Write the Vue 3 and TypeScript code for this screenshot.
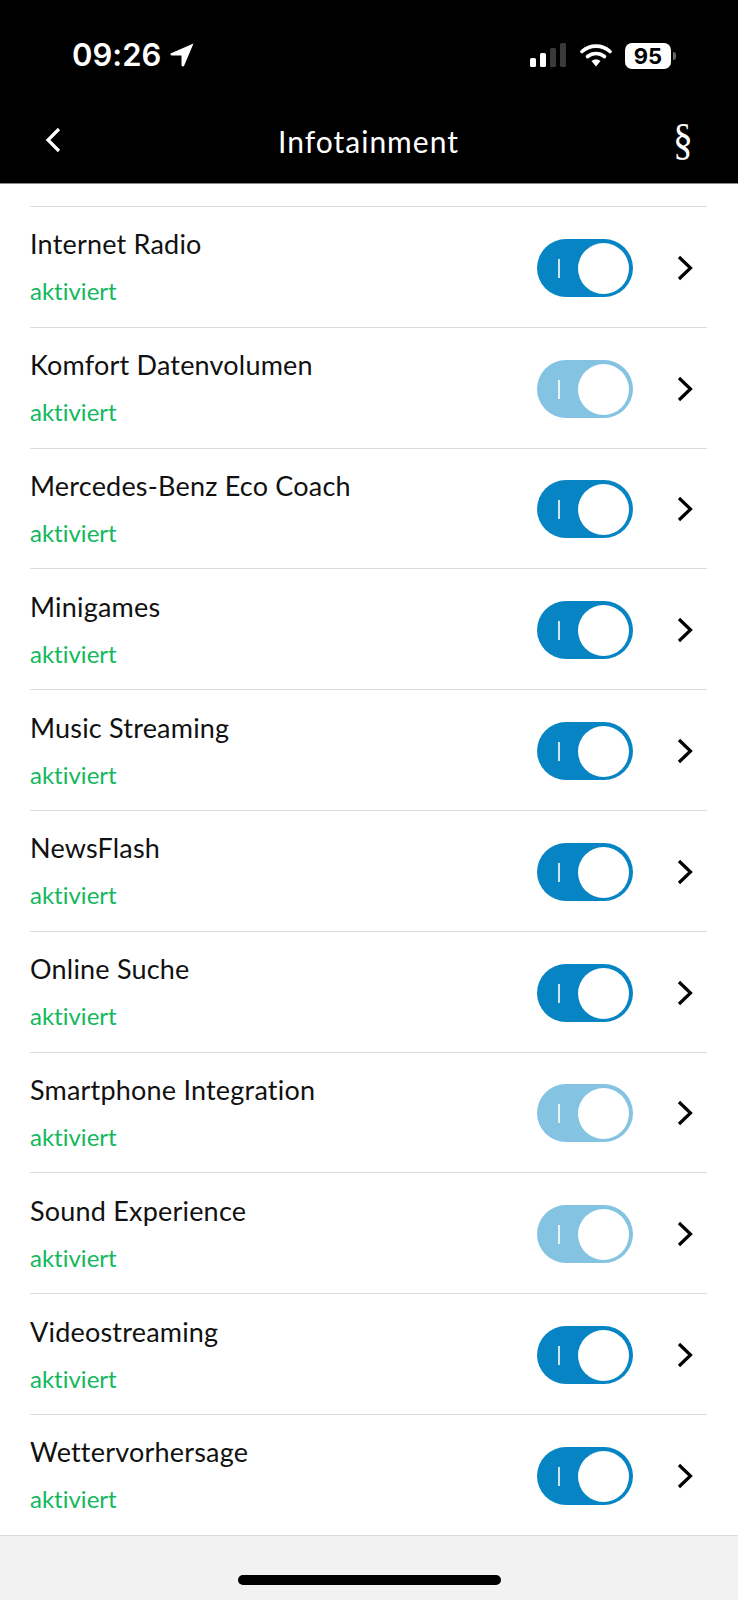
<script setup lang="ts">
interface Row { name: string; dim?: boolean }
const rows: Row[] = [
  { name: 'Internet Radio' },
  { name: 'Komfort Datenvolumen', dim: true },
  { name: 'Mercedes-Benz Eco Coach' },
  { name: 'Minigames' },
  { name: 'Music Streaming' },
  { name: 'NewsFlash' },
  { name: 'Online Suche' },
  { name: 'Smartphone Integration', dim: true },
  { name: 'Sound Experience', dim: true },
  { name: 'Videostreaming' },
  { name: 'Wettervorhersage' },
]
</script>

<template>
  <div class="page">
    <header class="top">
      <div class="status">
        <div class="clock">
          <span class="time">09:26</span>
          <svg class="loc" viewBox="0 0 24 24" width="24" height="24"><path d="M23.5 0.5 L0.5 10.5 Q0 12 1.5 12.5 L11.5 12.5 L11.5 22.5 Q12.5 24 14 23 Z" fill="#fff" /></svg>
        </div>
        <div class="indicators">
          <svg viewBox="0 0 36 24" width="36" height="24" class="signal">
            <rect x="0" y="15" width="6" height="9" rx="1.5" fill="#fff" />
            <rect x="10" y="10" width="6" height="14" rx="1.5" fill="#fff" />
            <rect x="20" y="5" width="6" height="19" rx="1.5" fill="#3a3a3a" />
            <rect x="30" y="0" width="6" height="24" rx="1.5" fill="#3a3a3a" />
          </svg>
          <svg viewBox="0 0 32 24" width="32" height="24" class="wifi">
            <path d="M2 8.5 A21 21 0 0 1 30 8.5" fill="none" stroke="#fff" stroke-width="3.6" stroke-linecap="round" />
            <path d="M7.5 13.5 A13.5 13.5 0 0 1 24.5 13.5" fill="none" stroke="#fff" stroke-width="3.6" stroke-linecap="round" />
            <path d="M11.5 18 L16 23.5 L20.5 18 A7 7 0 0 0 11.5 18 Z" fill="#fff" />
          </svg>
          <div class="battery">
            <span class="level">95</span>
            <span class="cap"></span>
          </div>
        </div>
      </div>
      <div class="nav">
        <svg class="back" viewBox="0 0 16 26" width="16" height="26"><path d="M14 2 L3 13 L14 24" fill="none" stroke="#fff" stroke-width="3.2" /></svg>
        <h1 class="title">Infotainment</h1>
        <span class="para">§</span>
      </div>
    </header>

    <main class="list">
      <div v-for="row in rows" :key="row.name" class="row">
        <div class="labels">
          <span class="name">{{ row.name }}</span>
          <span class="state">aktiviert</span>
        </div>
        <div class="toggle" :class="{ dim: row.dim }">
          <span class="mark"></span>
          <span class="knob"></span>
        </div>
        <svg class="chev" viewBox="0 0 16 26" width="16" height="26"><path d="M2 2 L13.5 13 L2 24" fill="none" stroke="#000" stroke-width="3.2" /></svg>
      </div>
    </main>

    <footer class="foot"><span class="home"></span></footer>
  </div>
</template>

<style>
html, body { margin: 0; background: #fff; }
</style>

<style scoped>
.page {
  width: 738px;
  height: 1600px;
  display: flex;
  flex-direction: column;
  font-family: "Lato", "Liberation Sans", sans-serif;
  font-variant-ligatures: none;
  overflow: hidden;
  background: #fff;
}
.top {
  height: 184px;
  box-sizing: border-box;
  background: #000;
  border-bottom: 1px solid #8a8a8a;
  color: #fff;
  display: flex;
  flex-direction: column;
}
.status {
  height: 36px;
  margin-top: 37px;
  padding: 0 62px 0 72px;
  display: flex;
  justify-content: space-between;
  align-items: center;
}
.clock { display: flex; align-items: center; gap: 9px; }
.time {
  font-family: "Inter", sans-serif;
  font-size: 31px;
  font-weight: 600;
  line-height: 36px;
}
.indicators { display: flex; align-items: center; }
.signal { margin-right: 14px; }
.wifi { margin-right: 13px; }
.battery { display: flex; align-items: center; margin-top: 2px; }
.level {
  width: 46px;
  height: 26px;
  border-radius: 7px;
  background: #fff;
  color: #000;
  font-family: "Inter", sans-serif;
  font-size: 22px;
  font-weight: 700;
  line-height: 26px;
  text-align: center;
}
.cap {
  width: 3px;
  height: 8px;
  margin-left: 2px;
  border-radius: 0 3px 3px 0;
  background: #666;
}
.nav {
  height: 60px;
  margin-top: 37px;
  padding: 0 44px 0 45px;
  display: flex;
  align-items: center;
  justify-content: space-between;
}
.title {
  margin: 2px 0 0 4px;
  font-size: 30px;
  font-weight: 400;
  letter-spacing: 1px;
  color: #fff;
}
.para {
  font-family: "Liberation Serif", serif;
  font-size: 44px;
  line-height: 60px;
  display: inline-block;
  transform: scaleX(0.9);
}
.list {
  flex: 1;
  margin: 0 31px 0 30px;
  padding-top: 22px;
}
.row {
  height: 120.8px;
  box-sizing: border-box;
  border-top: 1px solid #dcdcdc;
  display: flex;
  align-items: center;
}
.labels { flex: 1; display: flex; flex-direction: column; gap: 16px; padding-top: 1px; }
.name { font-size: 27px; line-height: 32px; color: #111; letter-spacing: 0.2px; }
.state { font-size: 24px; line-height: 30px; color: #12b85c; letter-spacing: 0; }
.toggle {
  width: 96px;
  height: 58px;
  border-radius: 29px;
  background: #0784c3;
  position: relative;
  margin: 2px 45px 0 0;
}
.toggle.dim { background: #84c3e2; }
.mark {
  position: absolute;
  left: 21px;
  top: 20px;
  width: 2px;
  height: 19px;
  background: rgba(255, 255, 255, 0.8);
}
.knob {
  position: absolute;
  right: 4px;
  top: 4px;
  width: 51px;
  height: 51px;
  border-radius: 50%;
  background: #fff;
}
.chev { margin: 2px 14px 0 -1px; }
.foot {
  height: 64px;
  background: #f2f2f2;
  border-top: 1px solid #dcdcdc;
  position: relative;
}
.home {
  position: absolute;
  left: 238px;
  top: 39px;
  width: 263px;
  height: 10px;
  border-radius: 5px;
  background: #000;
}
</style>
